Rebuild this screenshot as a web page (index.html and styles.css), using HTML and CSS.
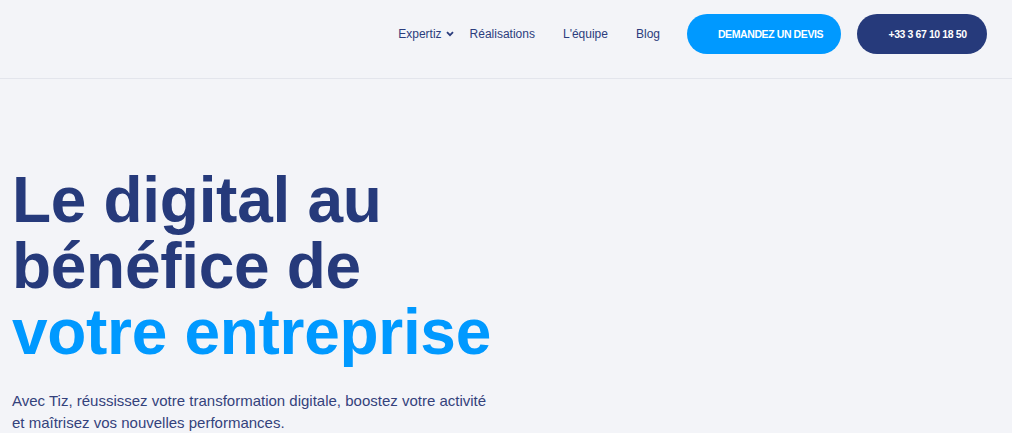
FILE: index.html
```html
<!DOCTYPE html>
<html lang="fr">
<head>
<meta charset="utf-8">
<title>Tiz</title>
<link rel="stylesheet" href="styles.css">
</head>
<body>
<header class="site-header">
  <nav class="main-nav">
    <a class="nav-link nav-dropdown" href="#">Expertiz
      <svg class="chevron" width="8" height="6" viewBox="0 0 8 6"><path d="M1 1.2 L4 4.2 L7 1.2" fill="none" stroke="currentColor" stroke-width="1.8"/></svg>
    </a>
    <a class="nav-link" href="#">Réalisations</a>
    <a class="nav-link" href="#">L'équipe</a>
    <a class="nav-link" href="#">Blog</a>
  </nav>
  <div class="header-actions">
    <a class="btn btn-quote" href="#">DEMANDEZ UN DEVIS</a>
    <a class="btn btn-phone" href="#">+33 3 67 10 18 50</a>
  </div>
</header>
<main class="hero">
  <h1 class="hero-title">Le digital au<br>bénéfice de<br><span class="accent">votre entreprise</span></h1>
  <p class="hero-text">Avec Tiz, réussissez votre transformation digitale, boostez votre activité<br>et maîtrisez vos nouvelles performances.</p>
</main>
</body>
</html>
```
FILE: styles.css
```css
html, body {
  margin: 0;
  padding: 0;
  background: #f3f4f8;
  font-family: "Liberation Sans", Arial, sans-serif;
}
a { text-decoration: none; }

.site-header {
  box-sizing: border-box;
  height: 79px;
  display: flex;
  justify-content: flex-end;
  align-items: flex-start;
  padding: 14px 25px 0 0;
  border-bottom: 1px solid #e3e5ec;
}
.main-nav {
  display: flex;
  align-items: center;
  height: 40px;
  margin-right: 27px;
}
.nav-link {
  color: #2b3d7d;
  font-size: 12px;
  margin-left: 28px;
  display: flex;
  align-items: center;
}
.nav-link:first-child { margin-left: 0; }
.nav-dropdown { margin-right: -12px; }
.chevron { margin-left: 4px; }

.header-actions {
  display: flex;
  gap: 16px;
}
.btn {
  box-sizing: border-box;
  height: 40px;
  border-radius: 20px;
  display: flex;
  align-items: center;
  justify-content: center;
  color: #fff;
  font-weight: 700;
  font-size: 10.5px;
  letter-spacing: -0.4px;
}
.btn-quote {
  width: 154px;
  background: #0099ff;
  padding-left: 13px;
}
.btn-phone {
  width: 130px;
  background: #263a7b;
  padding-left: 11px;
}

.hero {
  padding: 88px 0 0 12px;
}
.hero-title {
  margin: 0;
  font-size: 64px;
  line-height: 66px;
  font-weight: 700;
  letter-spacing: -0.3px;
  color: #263a7b;
}
.accent { color: #0099ff; }
.hero-text {
  margin: 25px 0 0;
  font-size: 15px;
  line-height: 22px;
  color: #34427c;
}
```
